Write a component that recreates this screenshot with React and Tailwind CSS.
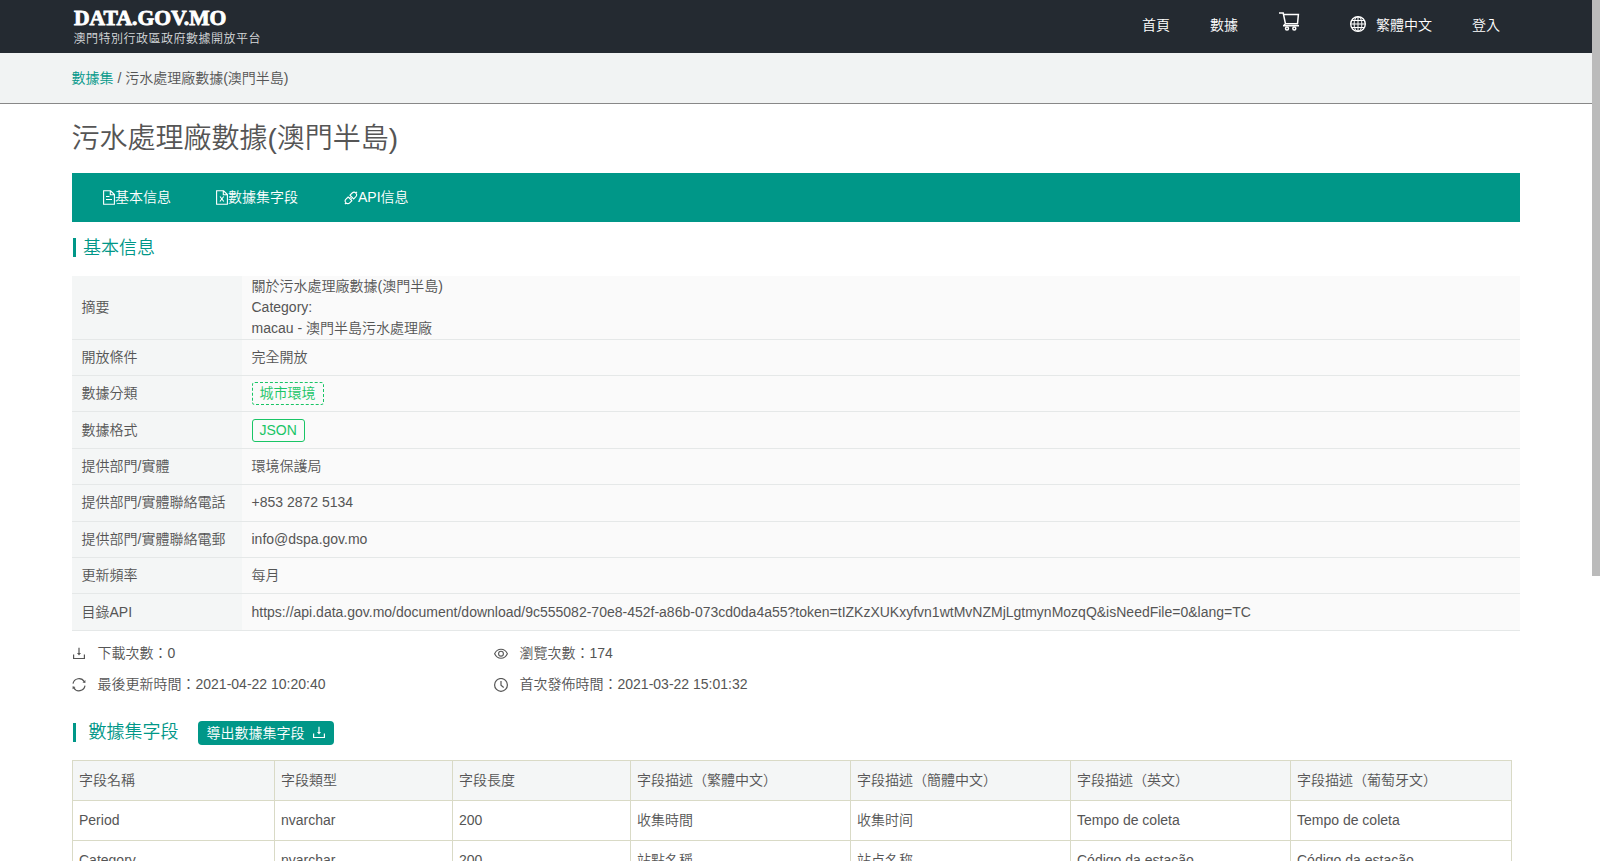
const info = [
  { label: '開放條件', value: '完全開放', h: 'h-[35px]' },
  { label: '數據分類', tag: '城市環境', dashed: true, h: 'h-[35px]' },
  { label: '數據格式', tag: 'JSON', h: 'h-9' },
  { label: '提供部門/實體', value: '環境保護局', h: 'h-[35px]' },
  { label: '提供部門/實體聯絡電話', value: '+853 2872 5134', h: 'h-9 pb-px' },
  { label: '提供部門/實體聯絡電郵', value: 'info@dspa.gov.mo', h: 'h-[35px]' },
  { label: '更新頻率', value: '每月', h: 'h-[35px]' },
  {
    label: '目錄API',
    value: 'https://api.data.gov.mo/document/download/9c555082-70e8-452f-a86b-073cd0da4a55?token=tIZKzXUKxyfvn1wtMvNZMjLgtmynMozqQ&isNeedFile=0&lang=TC',
    h: 'h-9',
  },
];

const fields = [
  ['字段名稱', '字段類型', '字段長度', '字段描述（繁體中文）', '字段描述（簡體中文）', '字段描述（英文）', '字段描述（葡萄牙文）'],
  ['Period', 'nvarchar', '200', '收集時間', '收集时间', 'Tempo de coleta', 'Tempo de coleta'],
  ['Category', 'nvarchar', '200', '站點名稱', '站点名称', 'Código da estação', 'Código da estação'],
];

function CartIcon() {
  return (
    <svg width="21" height="19" viewBox="0 0 21 19" fill="none" stroke="currentColor" strokeWidth="1.5">
      <path d="M0 1h4.2l2.4 11.3M4.6 2.4h14.8l-.9 9.4H6.5l-2 1.9M4 13.8h16" />
      <circle cx="8" cy="16.5" r="1.5" />
      <circle cx="15.3" cy="16.5" r="1.5" />
    </svg>
  );
}

function GlobeIcon() {
  return (
    <svg width="16" height="16" viewBox="0 0 16 16" fill="none" stroke="currentColor" strokeWidth="1">
      <circle cx="8" cy="8" r="7.3" strokeWidth="1.4" />
      <ellipse cx="8" cy="8" rx="3.9" ry="7.3" />
      <path d="M8 .7v14.6M.7 8h14.6M2 4.5h12M2 11.5h12" />
    </svg>
  );
}

function FileIcon({ children }) {
  return (
    <svg width="12" height="15" viewBox="0 0 12 15" fill="none" stroke="currentColor" strokeWidth="1.1">
      <path d="M.6.8h7l3.8 3.8v9.6H.6zM7.3.8v4h4" />
      {children}
    </svg>
  );
}

function LinkIcon() {
  return (
    <svg width="14" height="14" viewBox="0 0 14 14" fill="none" stroke="currentColor" strokeWidth="1.1">
      <path d="M6 4.2 8.2 2a2.6 2.6 0 0 1 3.7 3.7L9.7 7.900zM4.200 6 2 8.200a2.600 2.600 0 0 0 3.700 3.700l2.200-2.200zM11.800 2.100 13 .9M2.100 11.800.9 13M5.500 7.200l1.100-1.100M6.700 8.400l1.100-1.100" />
    </svg>
  );
}

function DownloadIcon() {
  return (
    <svg width="14" height="14" viewBox="0 0 14 14" fill="none" stroke="currentColor" strokeWidth="1.2">
      <path d="M1.6 7.6v3.9h10.8V7.6M7 .8v6" />
      <path d="M5 5.9h4L7 8.5z" fill="currentColor" stroke="none" />
    </svg>
  );
}

function SyncIcon() {
  return (
    <svg width="14" height="14" viewBox="0 0 14 14" fill="none" stroke="currentColor" strokeWidth="1.2">
      <path d="M1 5.7a6.1 6.1 0 0 1 11.3-2M13 7.7a6.1 6.1 0 0 1-11.3 2" />
      <path d="M13.4 2.1v3l-2.9-.7zM.6 11.3v-3l2.9.7z" fill="currentColor" stroke="none" />
    </svg>
  );
}

function EyeIcon() {
  return (
    <svg width="14" height="14" viewBox="0 0 14 14" fill="none" stroke="currentColor" strokeWidth="1.1">
      <path d="M.6 6.7C2 3.7 4.3 2.200 7 2.200s5 1.500 6.400 4.500c-1.400 3-3.700 4.500-6.400 4.500S2 9.700.6 6.700z" />
      <circle cx="7" cy="6.7" r="2.4" />
    </svg>
  );
}

function ClockIcon() {
  return (
    <svg width="14" height="14" viewBox="0 0 14 14" fill="none" stroke="currentColor" strokeWidth="1.2">
      <circle cx="7" cy="6.9" r="6.4" />
      <path d="M7 3v4.3l2.7 2.2" />
    </svg>
  );
}

function Stat({ icon, children }) {
  return (
    <div className="flex items-center h-[31px]">
      <span className="w-[14px] mr-[11.5px] shrink-0">{icon}</span>
      <span>{children}</span>
    </div>
  );
}

function Header() {
  return (
    <header className="h-[53px] bg-[#242a31] text-white flex">
      <div className="pl-[73px] w-[1142px] pt-[8px]">
        <div className="h-5 w-[153px] ml-px leading-5 text-[20px] font-black font-['Liberation_Serif',serif] whitespace-nowrap origin-left scale-x-[1.08] [-webkit-text-stroke:0.8px_white]">DATA.GOV.MO</div>
        <div className="mt-[3px] ml-[0.5px] text-[12px] leading-4 tracking-[0.5px] text-[#d6d9db]">澳門特別行政區政府數據開放平台</div>
      </div>
      <nav className="flex h-[50px] items-center leading-[21px]">
        <span className="w-[68px]">首頁</span>
        <span className="w-[69px]">數據</span>
        <span className="w-[71px] pb-[7px]"><CartIcon /></span>
        <span className="w-[26px] pb-[2px]"><GlobeIcon /></span>
        <span className="w-[96px]">繁體中文</span>
        <span>登入</span>
      </nav>
    </header>
  );
}

function InfoRow({ label, h, children }) {
  return (
    <div className="flex border-b border-[#e5e8e8]">
      <div className={`w-[170px] shrink-0 bg-[#f4f6f6] pl-[9.5px] flex items-center ${h}`}>{label}</div>
      <div className={`flex-1 bg-[#fafafa] pl-[9.5px] flex items-center ${h}`}>{children}</div>
    </div>
  );
}

export default function App() {
  return (
    <div className="relative w-[1600px] h-[861px] overflow-hidden bg-white text-sm leading-[21px] font-[350] text-[#555] font-['Liberation_Sans','Noto_Sans_CJK_TC',sans-serif]">
      <div className="w-[1592px]">
        <Header />
        <div className="h-[51px] bg-[#f1f3f3] border-b border-[#888] pl-[71.5px] flex items-center whitespace-pre">
          <span className="text-[#009788]">數據集</span> / 污水處理廠數據(澳門半島)
        </div>

        <main className="ml-[72px] w-[1448px]">
          <h1 className="h-[69px] -ml-[0.5px] text-[28px] leading-[70px] font-[350]">污水處理廠數據(澳門半島)</h1>

          <div className="h-[49px] bg-[#009788] text-white flex items-center pl-[31px]">
            <div className="flex items-center w-[113px]">
              <FileIcon><path d="M3 6.5h3.5M3 9.5h6" /></FileIcon>
              基本信息
            </div>
            <div className="flex items-center w-[128px]">
              <FileIcon><path d="m4 6.5 3.8 5M7.7 6.5l-3.800 5" /></FileIcon>
              數據集字段
            </div>
            <div className="flex items-center"><LinkIcon />API信息</div>
          </div>

          <div className="h-[54px] flex items-center text-[18px] text-[#009788]">
            <span className="ml-px w-[3px] h-[19px] bg-[#009788] mr-[7px] mb-[3px]" />
            <h2 className="pb-[2px] font-[350]">基本信息</h2>
          </div>

          <InfoRow label="摘要" h="h-[63px]">
            <div>
              關於污水處理廠數據(澳門半島)<br />
              Category:<br />
              macau - 澳門半島污水處理廠
            </div>
          </InfoRow>
          {info.map((r) => (
            <InfoRow key={r.label} label={r.label} h={r.h}>
              {r.tag ? (
                <span className={`h-[23px] px-[7px] flex items-center rounded-[3px] border border-[#19c566] text-[#19c566] ${r.dashed ? 'border-dashed' : ''}`}>
                  {r.tag}
                </span>
              ) : r.value}
            </InfoRow>
          ))}

          <div className="pt-[7px] grid grid-cols-[422px_1fr]">
            <Stat icon={<DownloadIcon />}>下載次數：0</Stat>
            <Stat icon={<EyeIcon />}>瀏覽次數：174</Stat>
            <Stat icon={<SyncIcon />}>最後更新時間：2021-04-22 10:20:40</Stat>
            <Stat icon={<ClockIcon />}>首次發佈時間：2021-03-22 15:01:32</Stat>
          </div>

          <div className="h-[60px] pt-[5px] flex items-center text-[18px] text-[#009788]">
            <span className="ml-px w-[3px] h-[19px] bg-[#009788] mr-[12.5px]" />
            <h2 className="font-[350]">數據集字段</h2>
            <button className="ml-[19.5px] w-[136px] h-6 rounded bg-[#009788] text-white text-sm font-[350] flex items-center pl-[8.5px] gap-[7.5px]">
              導出數據集字段
              <DownloadIcon />
            </button>
          </div>

          <div className="w-[1440px] border-l border-t border-[#d9dac6]">
            {fields.map((row, i) => (
              <div key={row[0]} className={`grid grid-cols-[202px_178px_178px_220px_220px_220px_221px] h-10 ${i === 0 ? 'bg-[#f4f6f6]' : ''}`}>
                {row.map((cell, j) => (
                  <div key={j} className="border-r border-b border-[#d9dac6] pl-[6px] flex items-center">{cell}</div>
                ))}
              </div>
            ))}
          </div>
        </main>
      </div>
      <div className="absolute right-0 top-0 w-2 h-[576px] bg-[#bbb]" />
    </div>
  );
}
